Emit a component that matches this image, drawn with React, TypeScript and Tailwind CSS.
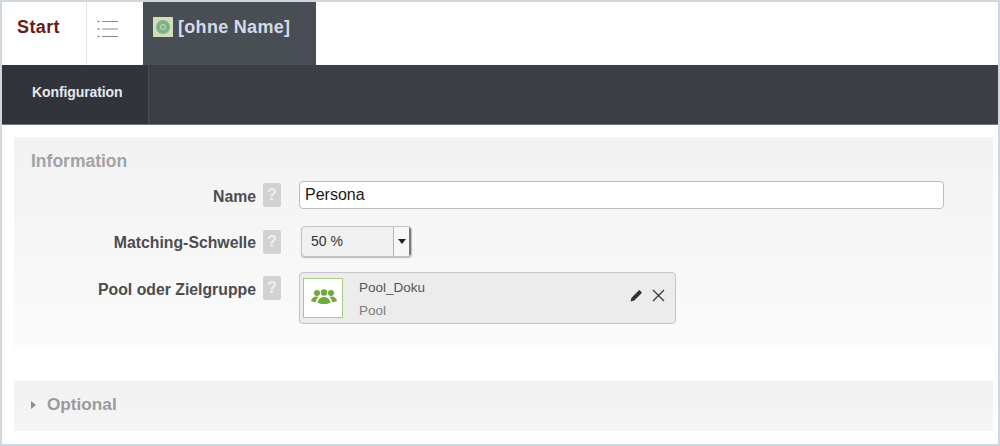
import React from 'react';

const HelpBadge: React.FC = () => (
  <span className="flex h-6 w-[18px] shrink-0 items-center justify-center rounded-[2px] bg-[#d2d2d2] text-[16px] font-bold text-[#f0f0f0]">
    ?
  </span>
);

const FormLabel: React.FC<{ text: string }> = ({ text }) => (
  <div className="flex w-[267px] shrink-0 items-center justify-end gap-[7px]">
    <span className="pt-[3px] text-[15.800px] font-bold leading-[20px] text-[#4c4c50]">{text}</span>
    <HelpBadge />
  </div>
);

const App: React.FC = () => {
  return (
    <div className="flex h-[446px] w-[1000px] flex-col overflow-hidden border-2 border-[#ced9df] bg-white font-['Liberation_Sans',sans-serif]">
      {/* Top tabs */}
      <div className="flex h-[63px] shrink-0">
        <div className="flex w-[85px] items-center border-r border-[#e3e6e8] pb-[13px] pl-[15px] text-[18px] font-bold tracking-[0.4px] text-[#6b1a17]">
          Start
        </div>
        <div className="flex w-[56px] items-center pb-[9px] pl-[10px]">
          <svg width="21" height="18" viewBox="0 0 21 18" fill="none" stroke="#8b8b8b" strokeWidth="1">
            <path d="M5 1.5h16M5 9h16M5 16.5h16" />
            <path d="M0.500 1.500h2M0.500 9h2M0.500 16.500h2" strokeWidth="1.500" />
          </svg>
        </div>
        <div className="flex w-[173px] items-center gap-[5px] bg-[#484e54] pb-[13px] pl-[10px]">
          <span className="flex h-5 w-5 items-center justify-center bg-[#cfe0b8]">
            <span className="flex h-[14px] w-[14px] items-center justify-center rounded-full bg-[#7fb08a]">
              <span className="h-[6px] w-[6px] rounded-full border border-[#cfe0b8]" />
            </span>
          </span>
          <span className="text-[18px] font-bold tracking-[0.3px] text-[#d5dbe6]">[ohne Name]</span>
        </div>
      </div>

      {/* Dark nav */}
      <div className="flex h-[60px] shrink-0 border-b border-[#75787c] bg-[#3b3e45]">
        <div className="flex w-[147px] items-center border-r border-[#484b52] bg-[#31343a] pb-[4px] pl-[30px] text-[14px] font-bold tracking-[-0.1px] text-[#e3e9f2]">
          Konfiguration
        </div>
      </div>

      {/* Information */}
      <div className="ml-3 mr-[5px] mt-3 flex h-[211px] shrink-0 flex-col bg-gradient-to-b from-[#f2f2f2] to-[#fbfbfb]">
        <div className="pl-[17px] pt-[14px] text-[17.500px] font-bold leading-[20px] text-[#a3a3a3]">Information</div>
        <div className="mt-[10px] flex h-[28px] items-center">
          <FormLabel text="Name" />
          <div className="ml-[18px] flex h-[28px] w-[645px] items-center rounded-[4px] border border-[#bdbdbd] bg-white pl-[5px] text-[16px] text-[#17171c]">
            Persona
          </div>
        </div>
        <div className="mt-[17px] flex h-[31px] items-center">
          <FormLabel text="Matching-Schwelle" />
          <div className="ml-[20px] flex h-[31px] w-[111px] items-stretch overflow-hidden rounded-[4px] border border-[#c4c4c4] bg-[#f0f0f0] shadow-[0_1px_1px_#bbbbbb]">
            <div className="flex flex-1 items-center pl-[9px] text-[14px] text-[#333333]">50 %</div>
            <div className="flex w-[18px] items-center justify-center border-l border-r-2 border-l-[#b5b5b5] border-r-[#7a7a7a] bg-[#f7f7f7]">
              <span className="h-0 w-0 border-x-[4px] border-t-[5px] border-x-transparent border-t-[#222222]" />
            </div>
          </div>
        </div>
        <div className="mt-[15px] flex items-start">
          <div className="pt-[4px]">
            <FormLabel text="Pool oder Zielgruppe" />
          </div>
          <div className="ml-[18px] flex h-[52px] w-[377px] items-center rounded-[4px] border border-[#c6c6c6] bg-[#ececec] pl-[3px]">
            <div className="flex h-10 w-10 shrink-0 items-center justify-center border border-[#a9cc85] bg-white">
              <svg width="26" height="18" viewBox="0 0 26 18" fill="#6eab3a" className="-mt-[2px] ml-[1px]">
                <circle cx="6" cy="5" r="3" />
                <circle cx="13" cy="4.500" r="3.200" />
                <circle cx="20" cy="5" r="3" />
                <path d="M0 13c.5-3 3-4.500 5-4.500 1 0 2 .3 2.700.8C6 10.500 5 12 5 14c-2 0-4-.4-5-1z" />
                <path d="M26 13c-.5-3-3-4.500-5-4.500-1 0-2 .3-2.700.8C20 10.500 21 12 21 14c2 0 4-.4 5-1z" />
                <path d="M6.500 14.500c.3-3 3-5.500 6.500-5.500s6.200 2.500 6.500 5.500c-1.500 1-4 1.500-6.500 1.500s-5-.5-6.500-1.500z" />
              </svg>
            </div>
            <div className="ml-[16px] flex flex-1 flex-col gap-[8px] pt-[2px] text-[13.500px] leading-[15px]">
              <span className="text-[#55555a]">Pool_Doku</span>
              <span className="text-[#7d7d82]">Pool</span>
            </div>
            <div className="mb-[5px] mr-[10px] flex items-center gap-[9px]">
              <svg width="13" height="13" viewBox="0 0 13 13" fill="#333333">
                <path d="M0.500 12.500l1-3.800 7-7c.5-.5 1.200-.5 1.700 0l1.100 1.100c.5.5.5 1.200 0 1.700l-7 7z" />
              </svg>
              <svg width="13" height="13" viewBox="0 0 13 13" fill="none" stroke="#3a3a3a" strokeWidth="1.300">
                <path d="M1 1l11 11M12 1L1 12" />
              </svg>
            </div>
          </div>
        </div>
      </div>

      {/* Optional */}
      <div className="ml-3 mr-[5px] mt-[33px] flex h-[50px] shrink-0 items-center gap-[11px] bg-gradient-to-b from-[#f1f1f1] to-[#f6f6f6] pb-[2px] pl-[17px]">
        <span className="h-0 w-0 border-y-[4px] border-l-[5px] border-y-transparent border-l-[#8d8d8d]" />
        <span className="text-[17.200px] font-bold text-[#9a9a9e]">Optional</span>
      </div>
    </div>
  );
};

export default App;
